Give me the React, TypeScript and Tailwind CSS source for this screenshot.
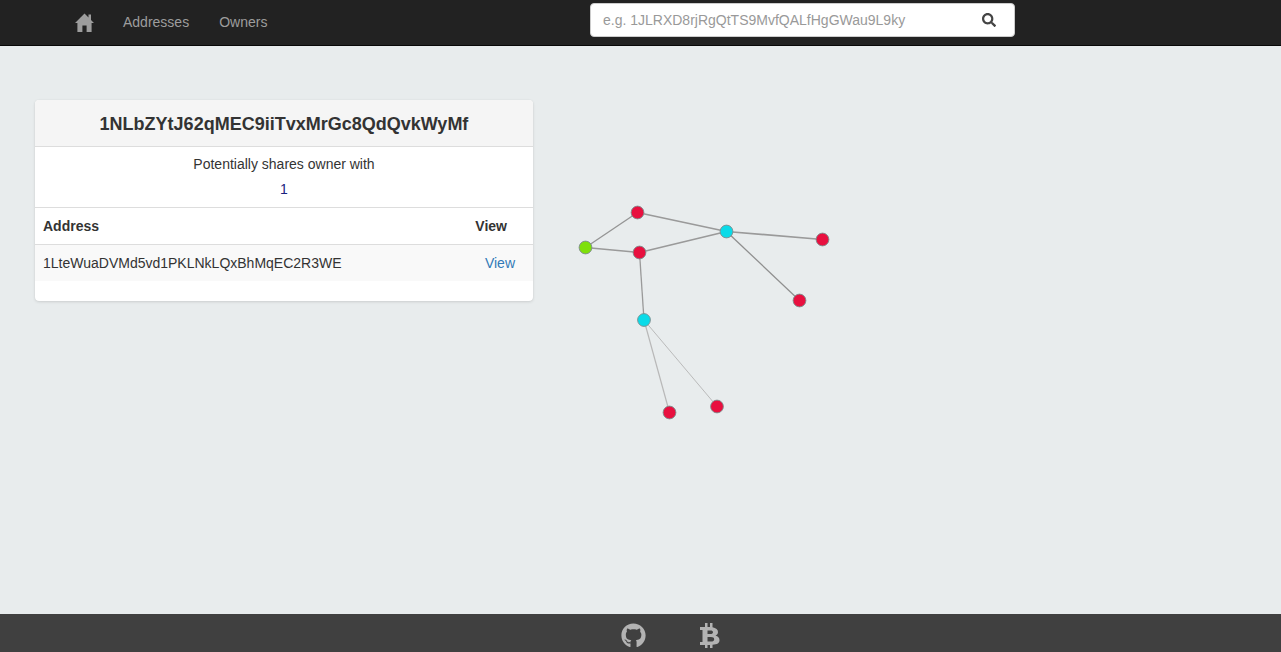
import { FaGithub, FaSearch } from "react-icons/fa";

const nodes = [
	{ x: 67.5, y: 27.5, color: "#e8103f" },
	{ x: 69.5, y: 67.5, color: "#e8103f" },
	{ x: 15.5, y: 62.5, color: "#7ee00a" },
	{ x: 156.5, y: 46.5, color: "#0adbe8" },
	{ x: 252.5, y: 54.5, color: "#e8103f" },
	{ x: 229.5, y: 115.5, color: "#e8103f" },
	{ x: 74, y: 135, color: "#0adbe8" },
	{ x: 99.5, y: 227.5, color: "#e8103f" },
	{ x: 147, y: 221.5, color: "#e8103f" },
];

const links = [
	{ from: 2, to: 0, width: 1.3, color: "#949494" },
	{ from: 2, to: 1, width: 1.7, color: "#9a9a9a" },
	{ from: 0, to: 3, width: 1.7, color: "#9a9a9a" },
	{ from: 1, to: 3, width: 1.7, color: "#9a9a9a" },
	{ from: 3, to: 4, width: 1.7, color: "#9a9a9a" },
	{ from: 3, to: 5, width: 1.3, color: "#8f8f8f" },
	{ from: 1, to: 6, width: 1.3, color: "#9a9a9a" },
	{ from: 6, to: 7, width: 1.2, color: "#b8b8b8" },
	{ from: 6, to: 8, width: 0.9, color: "#b4b4b4" },
];

function Graph() {
	return (
		<svg width="270" height="240" viewBox="0 0 270 240" className="mt-[85px] ml-[37px] shrink-0">
			{links.map((link, i) => (
				<line
					key={i}
					x1={nodes[link.from].x}
					y1={nodes[link.from].y}
					x2={nodes[link.to].x}
					y2={nodes[link.to].y}
					stroke={link.color}
					strokeWidth={link.width}
				/>
			))}
			{nodes.map((node, i) => (
				<circle key={i} cx={node.x} cy={node.y} r="6.4" fill={node.color} stroke="#7f8c8d" strokeWidth="0.9" />
			))}
		</svg>
	);
}

export default function App() {
	return (
		<div className="min-h-screen flex flex-col bg-[#e8eced] text-[14px] leading-[20px] text-[#333333] font-['Liberation_Sans',Arial,sans-serif]">
			{/* Navbar */}
			<nav className="h-[46px] shrink-0 bg-[#222222] border-b border-[#080808] flex">
				<div className="w-[590px] shrink-0 flex items-center pl-[75px] pb-[1px] text-[#9d9d9d]">
					<svg width="19" height="19" viewBox="0 0 19 19" fill="#9d9d9d" className="mr-[29px]">
						<path d="M9.5 0.5 L13.5 4.4 V1.6 H16 V6.9 L19 10 H16.6 V19 H11.6 V12.4 H7.4 V19 H2.4 V10 H0 Z" />
					</svg>
					<a className="mr-[30px]">Addresses</a>
					<a>Owners</a>
				</div>
				<div className="w-[425px] h-[34px] mt-[3px] bg-white rounded-[4px] border border-[#cccccc] flex items-center pl-[12px] pr-[18px]">
					<span className="flex-1 text-[#999999]">e.g. 1JLRXD8rjRgQtTS9MvfQALfHgGWau9L9ky</span>
					<FaSearch className="text-[14px] text-[#444444]" />
				</div>
			</nav>

			{/* Content */}
			<main className="flex-1 flex items-start pl-[35px] pt-[54px]">
				<div className="w-[498px] h-[201px] shrink-0 bg-white rounded-[4px] shadow-[0_1px_3px_rgba(0,0,0,0.12),0_0_1px_rgba(0,0,0,0.1)] overflow-hidden">
					<div className="h-[47px] pt-[1px] bg-[#f5f5f5] border-b border-[#dddddd] flex items-center justify-center text-[18px] font-bold">
						1NLbZYtJ62qMEC9iiTvxMrGc8QdQvkWyMf
					</div>
					<div className="h-[61px] border-b border-[#dddddd] flex flex-col items-center pt-[7px] gap-[5px]">
						<p>Potentially shares owner with</p>
						<a className="text-[#1a237e]">1</a>
					</div>
					<div className="h-[37px] border-b border-[#dddddd] flex items-center justify-between pl-[8px] pr-[26px] font-bold">
						<span>Address</span>
						<span>View</span>
					</div>
					<div className="h-[36px] bg-[#f9f9f9] flex items-center justify-between pl-[8px] pr-[18px]">
						<span>1LteWuaDVMd5vd1PKLNkLQxBhMqEC2R3WE</span>
						<a className="text-[#337ab7]">View</a>
					</div>
				</div>
				<Graph />
			</main>

			{/* Footer */}
			<footer className="h-[38px] shrink-0 bg-[#404040] flex items-center justify-center pl-[60px] pt-[4px] text-[#b3b3b3]">
				<div className="flex items-center gap-[54px]">
					<FaGithub className="text-[25px]" />
					<svg width="20" height="25" viewBox="0 0 20 25" fill="#b3b3b3" fillRule="evenodd">
						<path d="M0 4 H5 V0 H7.5 V4 H10 V0 H12.5 V4.2 C16 4.8 18 6.5 18 9 C18 10.8 17 12 15.5 12.6 C18 13.2 19.5 15 19.5 17.3 C19.5 20 17.5 21.5 12.5 21.8 V25 H10 V22 H7.5 V25 H5 V22 H0 V19 H2.5 V7 H0 Z M7.5 7.5 V11 H10.5 C12 11 13 10.3 13 9.2 C13 8.1 12 7.5 10.5 7.5 Z M7.5 14 V18.5 H11 C13 18.5 14.2 17.6 14.2 16.2 C14.2 14.8 13 14 11 14 Z" />
					</svg>
				</div>
			</footer>
		</div>
	);
}
